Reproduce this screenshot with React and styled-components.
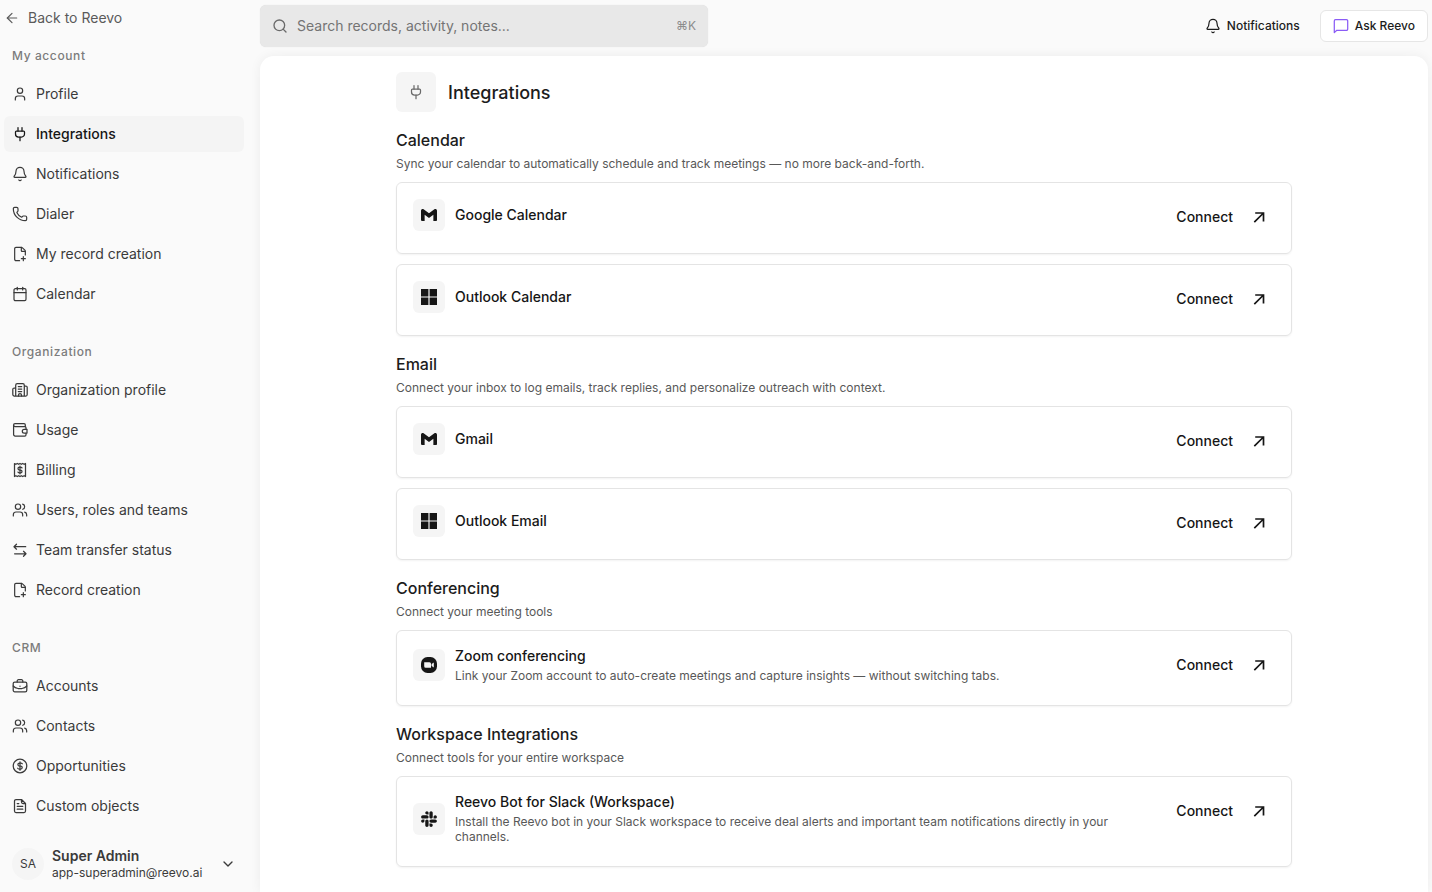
import React from 'react'
import styled, { createGlobalStyle, css } from 'styled-components'
import {
  ArrowLeft,
  Bell,
  Calendar,
  ChevronDown,
  FilePlusCorner,
  Phone,
  Search,
  User,
  Users
} from 'lucide-react'
import { FaSlack } from 'react-icons/fa'

const GlobalStyle = createGlobalStyle`
  * {
    box-sizing: border-box;
  }

  body {
    margin: 0;
    background: #fafafa;
    color: #1c1c1c;
    font-family: Inter, 'Liberation Sans', sans-serif;
    font-size: 14px;
    line-height: 20px;
  }

  button, input {
    font: inherit;
    color: inherit;
  }

  h1, h2, h3, p {
    margin: 0;
  }
`

const Layout = styled.div`
  display: flex;
  height: 100vh;
  overflow: hidden;
`

const Sidebar = styled.aside`
  display: flex;
  flex-direction: column;
  flex: none;
  width: 260px;
  padding: 8px 16px 8px 4px;
  color: #3a3a3a;
`

const BackLink = styled.a`
  display: flex;
  align-items: center;
  gap: 8px;
  height: 20px;
  color: #5a5a5a;
  text-decoration: none;
`

const Nav = styled.nav`
  flex: 1;
  min-height: 0;
  overflow: hidden;
  padding-top: 20px;
`

const NavGroup = styled.section`
  & + & {
    margin-top: 32px;
  }
`

const GroupLabel = styled.h3`
  padding: 0 8px;
  margin-bottom: 12px;
  font-size: 12px;
  font-weight: 500;
  line-height: 16px;
  letter-spacing: 0.05em;
  color: #7c7c7c;
`

const NavList = styled.ul`
  display: flex;
  flex-direction: column;
  gap: 4px;
  margin: 0;
  padding: 0;
  list-style: none;
`

const NavItem = styled.a`
  display: flex;
  align-items: center;
  gap: 8px;
  height: 36px;
  padding: 0 8px;
  border-radius: 6px;
  color: #3a3a3a;
  text-decoration: none;

  ${props =>
    props.$active &&
    css`
      background: #f4f4f4;
      color: #161616;
      font-weight: 500;
    `}
`

const Account = styled.button`
  display: flex;
  align-items: center;
  gap: 8px;
  height: 40px;
  padding: 0 8px;
  border: 0;
  background: none;
  text-align: left;
`

const Avatar = styled.span`
  display: flex;
  align-items: center;
  justify-content: center;
  width: 32px;
  height: 32px;
  border-radius: 50%;
  background: #f5f5f5;
  font-size: 12px;
`

const AccountText = styled.span`
  display: flex;
  flex-direction: column;
  flex: 1;
`

const AccountName = styled.span`
  font-weight: 600;
  line-height: 18px;
`

const AccountMail = styled.span`
  font-size: 12px;
  line-height: 16px;
`

const Content = styled.div`
  display: flex;
  flex-direction: column;
  flex: 1;
  min-width: 0;
  padding-right: 4px;
`

const TopBar = styled.header`
  display: flex;
  align-items: center;
  justify-content: space-between;
  flex: none;
  height: 52px;
  margin-bottom: 4px;
`

const SearchBox = styled.label`
  display: flex;
  align-items: center;
  gap: 9px;
  flex: 0 1 448px;
  height: 42px;
  padding: 0 12px;
  border-radius: 6px;
  background: #e8e8e8;
  box-shadow: 0 0 1px rgba(0, 0, 0, 0.15);
  color: #6a6a6a;
`

const SearchInput = styled.input`
  flex: 1;
  min-width: 0;
  padding: 0;
  border: 0;
  outline: 0;
  background: none;

  &::placeholder {
    color: #747474;
    opacity: 1;
  }
`

const Shortcut = styled.kbd`
  font-family: inherit;
  font-size: 12px;
  color: #8c8c8c;
`

const Actions = styled.div`
  display: flex;
  align-items: center;
  gap: 8px;
`

const ActionButton = styled.button`
  display: flex;
  align-items: center;
  gap: 6px;
  height: 32px;
  padding: 0 12px;
  border: ${props => (props.$outlined ? '1px solid #e6e6e6' : '0')};
  border-radius: 6px;
  background: ${props => (props.$outlined ? '#fff' : 'none')};
  font-size: 12px;
  font-weight: 500;
  color: #1c1c1c;
`

const Panel = styled.main`
  flex: 1;
  min-height: 0;
  overflow: hidden;
  padding: 16px;
  border-radius: 14px 14px 0 0;
  background: #fff;
  box-shadow: 0 0 12px rgba(0, 0, 0, 0.06);
`

const Page = styled.div`
  display: flex;
  flex-direction: column;
  gap: 16px;
  max-width: 896px;
  margin: 0 auto;
`

const PageHeader = styled.div`
  display: flex;
  align-items: center;
  gap: 12px;
`

const PageTitle = styled.h1`
  font-size: 18px;
  font-weight: 500;
  line-height: 27px;
`

const IconTile = styled.span`
  display: flex;
  align-items: center;
  justify-content: center;
  flex: none;
  width: ${props => (props.$large ? '40px' : '32px')};
  height: ${props => (props.$large ? '40px' : '32px')};
  border-radius: 6px;
  background: #f5f5f5;
  color: ${props => (props.$large ? '#6a6a6a' : '#161616')};
`

const SectionTitle = styled.h2`
  margin-bottom: 4px;
  font-size: 16px;
  font-weight: 500;
  line-height: 24px;
`

const SectionText = styled.p`
  margin-bottom: 10px;
  font-size: 12px;
  line-height: 16px;
  color: #585858;
`

const CardList = styled.div`
  display: flex;
  flex-direction: column;
  gap: 10px;
`

const Card = styled.article`
  display: flex;
  align-items: flex-start;
  gap: 24px;
  padding: 16px;
  border: 1px solid #e4e4e4;
  border-radius: 6px;
  box-shadow: 0 1px 2px rgba(0, 0, 0, 0.05);
`

const CardBody = styled.div`
  display: flex;
  align-items: center;
  gap: 10px;
  flex: 1;
  padding-bottom: 6px;
`

const CardTitle = styled.h3`
  font-size: 14px;
  font-weight: 500;
  line-height: 18px;
  color: #161616;
`

const CardText = styled.p`
  margin-top: 3px;
  font-size: 12px;
  line-height: 15px;
  color: #585858;
`

const ConnectButton = styled.button`
  display: flex;
  align-items: center;
  gap: 18px;
  height: 36px;
  padding: 0 8px;
  border: 0;
  background: none;
  font-weight: 500;
  color: #161616;
`

const Icon = ({ children }) => (
  <svg
    width="16"
    height="16"
    viewBox="0 0 16 16"
    fill="none"
    stroke="currentColor"
    strokeWidth="1.25"
    strokeLinecap="round"
    strokeLinejoin="round"
    aria-hidden="true"
  >
    {children}
  </svg>
)

const lucide = Glyph => () => <Glyph size={16} strokeWidth={1.8} />

const PlugIcon = () => (
  <Icon>
    <path d="M6 1.5V5M10 1.5V5M8 11v3.7" />
    <path d="M4.4 5h7.2a.9.9 0 0 1 .9.9v2A3.1 3.1 0 0 1 9.4 11H6.6a3.1 3.1 0 0 1-3.1-3.1v-2a.9.9 0 0 1 .9-.9z" />
  </Icon>
)

const BuildingIcon = () => (
  <Icon>
    <path d="M3.7 14V3.2a1.5 1.5 0 0 1 1.5-1.5h5.6a1.5 1.5 0 0 1 1.5 1.5V14M3.7 6H2.2A1.4 1.4 0 0 0 .8 7.4v5.2A1.4 1.4 0 0 0 2.2 14h11.6a1.4 1.4 0 0 0 1.4-1.4V5.4A1.4 1.4 0 0 0 13.8 4h-1.5" />
    <path d="M6.3 4.5h3.4M6.3 7h3.4M6.3 9.5h3.4M6.5 14v-1a1.5 1.5 0 0 1 3 0v1" />
  </Icon>
)

const WalletIcon = () => (
  <Icon>
    <path d="M13.3 4.5V3A1.3 1.3 0 0 0 12 1.7H3a1.4 1.4 0 0 0 0 2.8h9.7A1.3 1.3 0 0 1 14 5.800v1.200M1.600 3v9.500A1.500 1.500 0 0 0 3.100 14h9.600a1.300 1.300 0 0 0 1.300-1.300v-1.300" />
    <path d="M15 7.300h-2.800a1.900 1.900 0 0 0 0 3.800H15z" />
  </Icon>
)

const BillIcon = () => (
  <Icon>
    <path d="M2.5 1.5l1.4.8 1.4-.8 1.4.8L8 1.5l1.3.8 1.4-.8 1.4.8 1.4-.8v13l-1.4-.8-1.4.8-1.4-.8-1.3.8-1.300-.8-1.400.8-1.400-.8-1.400.8z" />
    <path d="M10 5.900c-.3-.5-.9-.7-1.500-.7H7.400a1.400 1.400 0 0 0 0 2.800h1.200a1.400 1.400 0 0 1 0 2.800H7.400c-.6 0-1.100-.3-1.400-.7M8 4.200v7.600" />
  </Icon>
)

const TransferIcon = () => (
  <Icon>
    <path d="M4.500 2.200 2 4.700l2.500 2.500M2 4.700h11.700M11.500 9.300 14 11.800l-2.500 2.500M14 11.800H2.600" />
  </Icon>
)

const BriefcaseIcon = () => (
  <Icon>
    <rect x="1.2" y="4" width="13.6" height="9.8" rx="1.6" />
    <path d="M5.200 4V3a1.300 1.300 0 0 1 1.300-1.300h3A1.300 1.300 0 0 1 10.800 3v1M1.200 8c1.200 1.500 3 2.300 4.800 2.500h4c1.800-.2 3.600-1 4.800-2.500M8 8.200v.1" />
  </Icon>
)

const DollarIcon = () => (
  <Icon>
    <circle cx="8" cy="8" r="6.8" />
    <path d="M10.300 5.800c-.3-.5-.9-.8-1.600-.8H7.400a1.500 1.500 0 0 0 0 3h1.300a1.500 1.500 0 0 1 0 3H7.300c-.7 0-1.300-.3-1.600-.8M8 3.800v8.400" />
  </Icon>
)

const DocumentIcon = () => (
  <Icon>
    <path d="M9.500 1.500H4A1.500 1.500 0 0 0 2.500 3v10A1.500 1.500 0 0 0 4 14.500h8a1.500 1.500 0 0 0 1.500-1.500V5.500zM9.500 1.500V4A1.500 1.500 0 0 0 11 5.500h2.500" />
    <path d="M5.200 5.500h1.600M5.200 8.300h5.600M5.200 11.200h5.600" />
  </Icon>
)

const ChatIcon = () => (
  <Icon>
    <path
      stroke="#8b5cf6"
      d="M1.300 14.600V2.900a1.200 1.200 0 0 1 1.200-1.200h11a1.200 1.200 0 0 1 1.200 1.200v8.200a1.200 1.200 0 0 1-1.200 1.200H3.800z"
    />
  </Icon>
)

const ConnectIcon = () => (
  <Icon>
    <path
      strokeWidth="1.7"
      strokeLinecap="butt"
      strokeLinejoin="miter"
      d="M4.200 4h8.300v8.400M12.500 4 3.300 13.200"
    />
  </Icon>
)

const GmailLogo = () => (
  <svg width="16" height="16" viewBox="0 0 24 24" fill="currentColor" aria-hidden="true">
    <path d="M24 5.457v13.909c0 .904-.732 1.636-1.636 1.636h-3.819V11.730L12 16.640l-6.545-4.910v9.273H1.636A1.636 1.636 0 0 1 0 19.366V5.457c0-2.023 2.309-3.178 3.927-1.964L5.455 4.640 12 9.548l6.545-4.910 1.528-1.145C21.690 2.280 24 3.434 24 5.457z" />
  </svg>
)

const WindowsLogo = () => (
  <svg width="16" height="16" viewBox="0 0 16 16" fill="currentColor" aria-hidden="true">
    <path d="M0 0h7.400v7.400H0zM8.600 0H16v7.400H8.600zM0 8.600h7.400V16H0zM8.600 8.600H16V16H8.600z" />
  </svg>
)

const ZoomLogo = () => (
  <svg width="16" height="16" viewBox="0 0 16 16" aria-hidden="true">
    <rect width="16" height="16" rx="6.5" fill="currentColor" />
    <path
      fill="#f5f5f5"
      d="M3.200 5.300h5.300a1.500 1.500 0 0 1 1.500 1.500v3.900H4.700a1.500 1.500 0 0 1-1.500-1.500zM10.600 7.100l2.200-1.700v5.200l-2.200-1.700z"
    />
  </svg>
)

const SlackLogo = () => <FaSlack size={18} aria-hidden="true" />

const navGroups = [
  {
    label: 'My account',
    items: [
      { name: 'Profile', icon: lucide(User) },
      { name: 'Integrations', icon: PlugIcon, active: true },
      { name: 'Notifications', icon: lucide(Bell) },
      { name: 'Dialer', icon: lucide(Phone) },
      { name: 'My record creation', icon: lucide(FilePlusCorner) },
      { name: 'Calendar', icon: lucide(Calendar) }
    ]
  },
  {
    label: 'Organization',
    items: [
      { name: 'Organization profile', icon: BuildingIcon },
      { name: 'Usage', icon: WalletIcon },
      { name: 'Billing', icon: BillIcon },
      { name: 'Users, roles and teams', icon: lucide(Users) },
      { name: 'Team transfer status', icon: TransferIcon },
      { name: 'Record creation', icon: lucide(FilePlusCorner) }
    ]
  },
  {
    label: 'CRM',
    items: [
      { name: 'Accounts', icon: BriefcaseIcon },
      { name: 'Contacts', icon: lucide(Users) },
      { name: 'Opportunities', icon: DollarIcon },
      { name: 'Custom objects', icon: DocumentIcon }
    ]
  }
]

const sections = [
  {
    title: 'Calendar',
    text: 'Sync your calendar to automatically schedule and track meetings — no more back-and-forth.',
    cards: [
      { name: 'Google Calendar', logo: GmailLogo },
      { name: 'Outlook Calendar', logo: WindowsLogo }
    ]
  },
  {
    title: 'Email',
    text: 'Connect your inbox to log emails, track replies, and personalize outreach with context.',
    cards: [
      { name: 'Gmail', logo: GmailLogo },
      { name: 'Outlook Email', logo: WindowsLogo }
    ]
  },
  {
    title: 'Conferencing',
    text: 'Connect your meeting tools',
    cards: [
      {
        name: 'Zoom conferencing',
        logo: ZoomLogo,
        text: 'Link your Zoom account to auto-create meetings and capture insights — without switching tabs.'
      }
    ]
  },
  {
    title: 'Workspace Integrations',
    text: 'Connect tools for your entire workspace',
    cards: [
      {
        name: 'Reevo Bot for Slack (Workspace)',
        logo: SlackLogo,
        text: 'Install the Reevo bot in your Slack workspace to receive deal alerts and important team notifications directly in your channels.'
      }
    ]
  }
]

const IntegrationCard = ({ name, text, logo: Logo }) => (
  <Card>
    <CardBody>
      <IconTile>
        <Logo />
      </IconTile>
      <div>
        <CardTitle>{name}</CardTitle>
        {text && <CardText>{text}</CardText>}
      </div>
    </CardBody>
    <ConnectButton type="button">
      Connect
      <ConnectIcon />
    </ConnectButton>
  </Card>
)

const App = () => (
  <>
    <GlobalStyle />
    <Layout>
      <Sidebar>
        <BackLink href="#home">
          <ArrowLeft size={16} strokeWidth={1.8} />
          Back to Reevo
        </BackLink>
        <Nav>
          {navGroups.map(group => (
            <NavGroup key={group.label}>
              <GroupLabel>{group.label}</GroupLabel>
              <NavList>
                {group.items.map(({ name, icon: ItemIcon, active }) => (
                  <li key={name}>
                    <NavItem href="#settings" $active={active}>
                      <ItemIcon />
                      {name}
                    </NavItem>
                  </li>
                ))}
              </NavList>
            </NavGroup>
          ))}
        </Nav>
        <Account type="button">
          <Avatar>SA</Avatar>
          <AccountText>
            <AccountName>Super Admin</AccountName>
            <AccountMail>app-superadmin@reevo.ai</AccountMail>
          </AccountText>
          <ChevronDown size={16} />
        </Account>
      </Sidebar>
      <Content>
        <TopBar>
          <SearchBox>
            <Search size={16} strokeWidth={2} />
            <SearchInput
              type="text"
              aria-label="Search"
              placeholder="Search records, activity, notes..."
            />
            <Shortcut>⌘K</Shortcut>
          </SearchBox>
          <Actions>
            <ActionButton type="button">
              <Bell size={16} strokeWidth={1.8} />
              Notifications
            </ActionButton>
            <ActionButton type="button" $outlined>
              <ChatIcon />
              Ask Reevo
            </ActionButton>
          </Actions>
        </TopBar>
        <Panel>
          <Page>
            <PageHeader>
              <IconTile $large>
                <PlugIcon />
              </IconTile>
              <PageTitle>Integrations</PageTitle>
            </PageHeader>
            {sections.map(section => (
              <section key={section.title}>
                <SectionTitle>{section.title}</SectionTitle>
                <SectionText>{section.text}</SectionText>
                <CardList>
                  {section.cards.map(card => (
                    <IntegrationCard key={card.name} {...card} />
                  ))}
                </CardList>
              </section>
            ))}
          </Page>
        </Panel>
      </Content>
    </Layout>
  </>
)

export default App
